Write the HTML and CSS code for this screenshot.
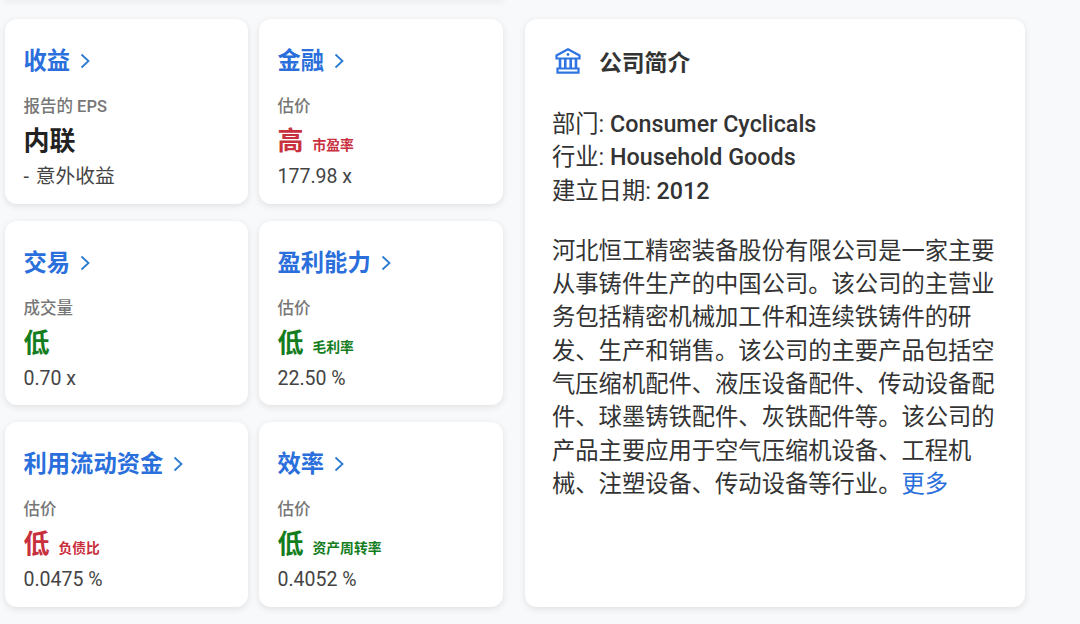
FILE: index.html
```html
<!DOCTYPE html>
<html lang="zh-CN">
<head>
    <meta charset="UTF-8">
    <title>公司简介</title>
    <link rel="stylesheet" href="styles.css">
</head>
<body>

<div class="page">
    <div class="left-col">
        <div class="top-edge"></div>
        <div class="metric-grid">
            <div class="card">
                <a class="card-title">收益 <svg class="chevron" viewBox="0 0 10 16"><path d="M1.5 1.5 8.5 8l-7 6.5"/></svg></a>
                <div class="label">报告的 EPS</div>
                <div class="level dark">内联</div>
                <div class="value"><span class="dash">-</span> <span class="value-cjk">意外收益</span></div>
            </div>
            <div class="card">
                <a class="card-title">金融 <svg class="chevron" viewBox="0 0 10 16"><path d="M1.5 1.5 8.5 8l-7 6.5"/></svg></a>
                <div class="label">估价</div>
                <div class="level red">高<span class="level-note">市盈率</span></div>
                <div class="value">177.98 x</div>
            </div>
            <div class="card">
                <a class="card-title">交易 <svg class="chevron" viewBox="0 0 10 16"><path d="M1.5 1.5 8.5 8l-7 6.5"/></svg></a>
                <div class="label">成交量</div>
                <div class="level green">低</div>
                <div class="value">0.70 x</div>
            </div>
            <div class="card">
                <a class="card-title">盈利能力 <svg class="chevron" viewBox="0 0 10 16"><path d="M1.5 1.5 8.5 8l-7 6.5"/></svg></a>
                <div class="label">估价</div>
                <div class="level green">低<span class="level-note">毛利率</span></div>
                <div class="value">22.50 %</div>
            </div>
            <div class="card">
                <a class="card-title">利用流动资金 <svg class="chevron" viewBox="0 0 10 16"><path d="M1.5 1.5 8.5 8l-7 6.5"/></svg></a>
                <div class="label">估价</div>
                <div class="level red">低<span class="level-note">负债比</span></div>
                <div class="value">0.0475 %</div>
            </div>
            <div class="card">
                <a class="card-title">效率 <svg class="chevron" viewBox="0 0 10 16"><path d="M1.5 1.5 8.5 8l-7 6.5"/></svg></a>
                <div class="label">估价</div>
                <div class="level green">低<span class="level-note">资产周转率</span></div>
                <div class="value">0.4052 %</div>
            </div>
        </div>
    </div>

    <!-- 公司简介 -->
    <div class="card profile">
        <div class="profile-head">
            <svg class="bank-icon" viewBox="0 0 26 26">
                <path d="M13 1.200 24.500 7.500V10.500H1.500V7.500Z"/>
                <circle class="bank-dot" cx="13" cy="6.500" r="1.400"/>
                <path class="bank-col" d="M5 11v9M10.300 11v9M15.700 11v9M21 11v9"/>
                <path d="M2.500 20.500H23.500V24.700H2.500Z"/>
            </svg>
            <h2>公司简介</h2>
        </div>
        <div class="facts">
            <div>部门: <b>Consumer Cyclicals</b></div>
            <div>行业: <b>Household Goods</b></div>
            <div>建立日期: <b>2012</b></div>
        </div>
        <p class="about">河北恒工精密装备股份有限公司是一家主要从事铸件生产的中国公司。该公司的主营业务包括精密机械加工件和连续铁铸件的研发、生产和销售。该公司的主要产品包括空气压缩机配件、液压设备配件、传动设备配件、球墨铸铁配件、灰铁配件等。该公司的产品主要应用于空气压缩机设备、工程机械、注塑设备、传动设备等行业。<a class="more">更多</a></p>
    </div>
</div>

</body>
</html>
```

FILE: styles.css
```css
body {
    margin: 0;
    height: 624px;
    overflow: hidden;
    background-color: #f8f9fa;
    font-family: Roboto, "Noto Sans CJK SC", sans-serif;
    color: #333;
}
.page {
    display: flex;
    align-items: flex-start;
    gap: 22px;
    padding-left: 5px;
}
.left-col {
    width: 498px;
}
/* bottom edge of the card above, only its shadow shows */
.top-edge {
    height: 0;
    box-shadow: 0 0 6px 1px rgba(0, 0, 0, 0.14);
}
.metric-grid {
    display: grid;
    grid-template-columns: 243px 244px;
    grid-template-rows: 185px 184px 185px;
    column-gap: 11px;
    row-gap: 17px;
    margin-top: 19px;
}
.card {
    box-sizing: border-box;
    background-color: #fff;
    border-radius: 12px;
    box-shadow: 0 2px 7px rgba(0, 0, 0, 0.1);
    padding: 25px 19px 0 18.500px;
}
.card-title {
    display: flex;
    align-items: flex-start;
    gap: 10px;
    height: 34px;
    line-height: 34px;
    font-size: 23.300px;
    font-weight: 700;
    color: #2a6fdb;
}
.chevron {
    align-self: center;
    width: 10px;
    height: 16px;
    fill: none;
    stroke: #2a7bd0;
    stroke-width: 1.800;
}
.label {
    margin-top: 17px;
    height: 24px;
    line-height: 24px;
    font-size: 16.500px;
    font-weight: 500;
    color: #777;
}
.level {
    height: 44px;
    line-height: 44px;
    font-size: 26px;
    font-weight: 700;
}
.dark { color: #222; }
.red { color: #c9303e; }
.green { color: #147d1e; }
.level-note {
    margin-left: 9px;
    font-size: 13.800px;
}
.value {
    margin-top: 1px;
    height: 26px;
    line-height: 26px;
    font-size: 19.500px;
    color: #444;
}
.dash {
    margin-right: 2px;
}
.value-cjk {
    font-size: 19.800px;
}
.profile {
    width: 500px;
    height: 588px;
    margin-top: 19px;
    padding: 0 27px;
}
.profile-head {
    display: flex;
    align-items: center;
    gap: 18px;
    height: 84px;
}
.bank-icon {
    width: 26px;
    height: 26px;
    margin-left: 3px;
    fill: none;
    stroke: #2f74e0;
    stroke-width: 2.200;
}
.bank-dot {
    fill: #2f74e0;
    stroke: none;
}
.bank-col {
    stroke-width: 2.600;
}
.profile-head h2 {
    margin: 0;
    font-size: 22.800px;
    font-weight: 700;
    color: #333;
}
.facts {
    margin-top: 5px;
    font-size: 23.300px;
    line-height: 33.300px;
}
.facts b {
    font-weight: 500;
}
.about {
    margin: 27px 0 0;
    width: 446px;
    font-size: 23.300px;
    line-height: 33.300px;
    color: #333;
}
.more {
    color: #2a6fdb;
}
```
